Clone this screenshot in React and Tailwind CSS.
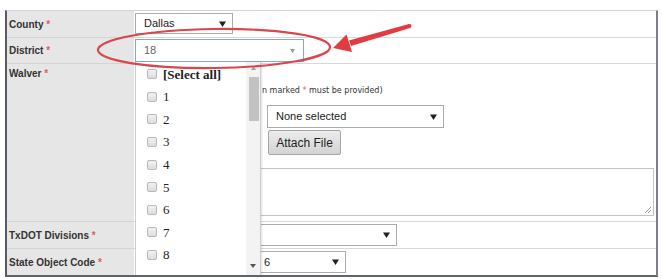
import React from "react";

const Caret = ({ className = "" }) => (
  <svg width="7" height="6" viewBox="0 0 7 6" className={className}>
    <path d="M0 0.5h7L3.5 6z" fill="currentColor" />
  </svg>
);

function Label({ children, className = "", top = false }) {
  return (
    <div
      className={`bg-[#e6e6e6] border-b border-[#d3d3d3] pl-[2px] text-[10px] font-bold text-[#333] flex ${
        top ? "items-start pt-[2px]" : "items-center"
      } ${className}`}
    >
      <span>
        {children} <span className="text-[#e35d5d]">*</span>
      </span>
    </div>
  );
}

function Select({ value, className = "", textClass = "" }) {
  return (
    <div
      className={`h-full flex items-center justify-between bg-white border border-[#ababab] text-[11px] text-[#222] pr-[6px] ${className}`}
    >
      <span className={textClass}>{value}</span>
      <Caret />
    </div>
  );
}

const items = ["1", "2", "3", "4", "5", "6", "7", "8"];

function Dropdown() {
  return (
    <div className="absolute left-[128px] top-[51px] w-[126px] h-[240px] bg-white border-l border-r border-[#cdcdcd] shadow-[1px_1px_2px_rgba(0,0,0,0.12)] flex">
      <div className="flex-1 pt-[1px] font-['Liberation_Serif',serif] text-[13px] text-[#222]">
        <div className="h-[22.6px] flex items-center pl-[11px] gap-[6px]">
          <span className="w-[10px] h-[10px] rounded-[2px] border border-[#b8b8b8] bg-gradient-to-b from-[#f2f2f2] to-[#dcdcdc]" />
          <span className="font-bold">[Select all]</span>
        </div>
        {items.map((n) => (
          <div key={n} className="h-[22.6px] flex items-center pl-[11px] gap-[6px]">
            <span className="w-[10px] h-[10px] rounded-[2px] border border-[#b8b8b8] bg-gradient-to-b from-[#f2f2f2] to-[#dcdcdc]" />
            <span>{n}</span>
          </div>
        ))}
      </div>
      <div className="w-[14px] h-[214px] bg-[#f3f3f3] flex flex-col items-center">
        <svg width="5" height="4" viewBox="0 0 5 4" className="mt-[4px] text-[#a3a3a3]">
          <path d="M0 4h5L2.5 0z" fill="currentColor" />
        </svg>
        <div className="mt-[7px] ml-[1px] w-[10px] h-[44px] bg-[#c2c2c2]" />
        <div className="flex-1" />
        <svg width="6" height="4" viewBox="0 0 6 4" className="mb-[8px] text-[#555]">
          <path d="M0 0h6L3 4z" fill="currentColor" />
        </svg>
      </div>
    </div>
  );
}

export default function App() {
  return (
    <div className="relative w-[662px] h-[279px] bg-white overflow-hidden font-['Liberation_Sans',Arial,sans-serif]">
      <div className="relative overflow-hidden ml-[5px] mt-[10px] w-[653px] border-t border-t-[#d4d4d4] border-l-2 border-r-2 border-b-2 border-l-[#565b72] border-r-[#7a7e90] border-b-[#5e6277] grid grid-cols-[127px_1fr] grid-rows-[27px_26px_158px_27px_26px]">
        <Label>County</Label>
        <div className="border-b border-[#d8d8d8] pl-[1px] pt-[2px] pb-[3px]">
          <Select value="Dallas" className="w-[98px] pl-[8px]" />
        </div>

        <Label>District</Label>
        <div className="border-b border-[#d8d8d8] pl-[1px] pt-[1px] pb-[1px]">
          <div className="h-full w-[169px] flex items-center justify-between bg-white border border-[#8aa3d1] text-[11px] text-[#666] pl-[8px] pr-[8px]">
            <span>18</span>
            <svg width="5" height="4" viewBox="0 0 5 4" className="text-[#999]">
              <path d="M0 0h5L2.5 4z" fill="currentColor" />
            </svg>
          </div>
        </div>

        <Label top>Walver</Label>
        <div className="border-b border-[#d8d8d8] flex flex-col">
          <p className="mt-[22px] ml-[128px] h-[10px] leading-[10px] font-['DejaVu_Sans',sans-serif] text-[8px] text-[#333] whitespace-nowrap">
            n marked <span className="text-[#e35d5d]">*</span> must be provided)
          </p>
          <div className="mt-[9px] ml-[133px] h-[23px]">
            <Select value="None selected" className="w-[177px] pl-[8px] text-[11px]" />
          </div>
          <button className="mt-[2px] ml-[134px] w-[73px] h-[25px] rounded-[2px] border border-[#a6a6a6] bg-gradient-to-b from-[#ececec] to-[#d3d3d3] text-[12px] text-[#222]">
            Attach File
          </button>
          <div className="relative mt-[13px] ml-[2px] w-[518px] h-[48px] border border-[#c4c4c4] bg-white">
            <svg width="8" height="8" viewBox="0 0 8 8" className="absolute right-[1px] bottom-[1px] text-[#999]">
              <path d="M7 1L1 7M7 4L4 7" stroke="currentColor" strokeWidth="1" />
            </svg>
          </div>
        </div>

        <Label>TxDOT Divisions</Label>
        <div className="border-b border-[#d8d8d8] pl-[1px] pt-[2px] pb-[2px]">
          <Select value="" className="w-[262px] pl-[8px]" />
        </div>

        <Label className="border-b-0">State Object Code</Label>
        <div className="pl-[1px] pt-[2px]">
          <div className="h-[22px]">
            <Select value="6" className="w-[211px] pl-[128px]" />
          </div>
        </div>

        <Dropdown />
      </div>

      <svg className="absolute inset-0 pointer-events-none" width="662" height="279" viewBox="0 0 662 279">
        <ellipse
          cx="214"
          cy="48.5"
          rx="116"
          ry="19.5"
          transform="rotate(-0.7 214 48.5)"
          fill="none"
          stroke="#d9464c"
          strokeWidth="2.2"
        />
        <path d="M409 24L349 40.5L351 46L410 28z" fill="#e23b40" />
        <circle cx="409.5" cy="26" r="2" fill="#e23b40" />
        <path d="M333 48L346.5 34.5L352 52z" fill="#e23b40" />
      </svg>
    </div>
  );
}
